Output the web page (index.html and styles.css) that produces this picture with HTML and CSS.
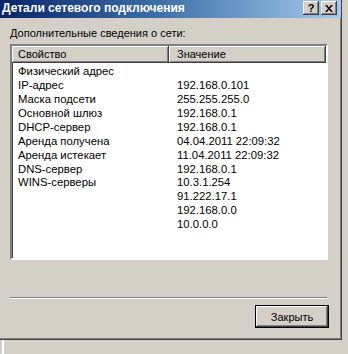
FILE: index.html
```html
<!DOCTYPE html>
<html lang="ru">
<head>
  <meta charset="UTF-8">
  <title>Детали сетевого подключения</title>
  <link rel="stylesheet" href="styles.css">
</head>
<body>

  <div class="window">
    <div class="title-bar">
      <span class="title">Детали сетевого подключения</span>
      <div class="title-buttons">
        <button class="tb-btn help">?</button>
        <button class="tb-btn close">
          <svg width="8" height="7" viewBox="0 0 8 7">
            <path d="M0 0h2l2 2.5L6 0h2L5 3.5 8 7H6L4 4.5 2 7H0l3-3.5z" fill="#000"/>
          </svg>
        </button>
      </div>
    </div>

    <div class="content">
      <div class="caption">Дополнительные сведения о сети:</div>

      <div class="list">
        <div class="list-header">
          <div class="col-head first">Свойство</div>
          <div class="col-head second">Значение</div>
        </div>
        <div class="rows" id="rows"></div>
      </div>

      <div class="separator"></div>

      <div class="footer">
        <button class="btn default">Закрыть</button>
      </div>
    </div>
  </div>

  <div class="behind"></div>

  <script>
    const details = [
      ["Физический адрес", ""],
      ["IP-адрес", "192.168.0.101"],
      ["Маска подсети", "255.255.255.0"],
      ["Основной шлюз", "192.168.0.1"],
      ["DHCP-сервер", "192.168.0.1"],
      ["Аренда получена", "04.04.2011 22:09:32"],
      ["Аренда истекает", "11.04.2011 22:09:32"],
      ["DNS-сервер", "192.168.0.1"],
      ["WINS-серверы", "10.3.1.254"],
      ["", "91.222.17.1"],
      ["", "192.168.0.0"],
      ["", "10.0.0.0"]
    ];

    const rowsDiv = document.getElementById("rows");
    details.forEach(([name, value]) => {
      rowsDiv.innerHTML += `<div class="row"><span class="cell name">${name}</span><span class="cell value">${value}</span></div>`;
    });
  </script>
</body>
</html>
```

FILE: styles.css
```css
:root {
  --face: #d4d0c8;
  --shadow: #808080;
  --dark: #404040;
  --light: #ffffff;
}

body {
  margin: 0;
  padding: 0;
  background-color: var(--face);
  font-family: 'Liberation Sans', Arial, sans-serif;
  font-size: 11px;
  color: #000;
  width: 348px;
  height: 354px;
  overflow: hidden;
}

.window {
  width: 341px;
  height: 339px;
  background-color: var(--face);
  border-right: 1px solid var(--dark);
  border-bottom: 1px solid var(--dark);
  box-shadow: inset -1px -1px 0 var(--shadow);
  display: flex;
  flex-direction: column;
}

.title-bar {
  height: 18px;
  display: flex;
  align-items: flex-start;
  background: linear-gradient(to right, #0a246a, #3a6ea5 45%, #a6caf0);
  padding-right: 4px;
}

.title {
  flex: 1;
  color: white;
  font-weight: bold;
  font-size: 12px;
  line-height: 16px;
  padding-left: 2px;
  white-space: nowrap;
}

.title-buttons {
  display: flex;
  gap: 2px;
  margin-top: 1px;
}

.tb-btn {
  width: 16px;
  height: 14px;
  padding: 0;
  margin: 0;
  background-color: var(--face);
  border: none;
  box-shadow: inset -1px -1px 0 var(--dark), inset 1px 1px 0 var(--light), inset -2px -2px 0 var(--shadow);
  font-family: 'Liberation Sans', Arial, sans-serif;
  font-weight: bold;
  font-size: 11px;
  line-height: 13px;
  display: flex;
  justify-content: center;
  align-items: center;
}

.content {
  flex: 1;
  display: flex;
  flex-direction: column;
  padding: 9px 13px 0 10px;
}

.caption {
  line-height: 13px;
  margin-bottom: 4px;
}

.list {
  height: 212px;
  background-color: white;
  border-top: 2px solid var(--shadow);
  border-left: 2px solid var(--shadow);
  border-right: 2px solid var(--light);
  border-bottom: 2px solid var(--light);
  box-shadow: inset 1px 1px 0 var(--dark);
  display: flex;
  flex-direction: column;
}

.list-header {
  display: flex;
}

.col-head {
  height: 17px;
  line-height: 16px;
  padding-left: 6px;
  box-sizing: border-box;
  background-color: var(--face);
  box-shadow: inset -1px -1px 0 var(--dark), inset 1px 1px 0 var(--light), inset -2px -2px 0 var(--shadow);
}

.col-head.first {
  width: 157px;
}

.col-head.second {
  width: 157px;
  padding-left: 8px;
}

.rows {
  padding-top: 1px;
  font-size: 11.3px;
}

.row {
  display: flex;
  height: 14px;
  line-height: 14px;
}

.row:nth-child(n+9) {
  margin-top: -1px;
  margin-bottom: 1px;
}

.cell.name {
  width: 159px;
  padding-left: 6px;
}

.separator {
  margin-top: 37px;
  border-top: 1px solid var(--shadow);
  border-bottom: 1px solid var(--light);
  box-sizing: border-box;
  height: 2px;
  width: 317px;
}

.footer {
  display: flex;
  justify-content: flex-end;
  margin-top: 6px;
}

.btn {
  width: 74px;
  height: 23px;
  padding: 0;
  margin-right: -1px;
  background-color: var(--face);
  border: 1px solid #000;
  box-shadow: inset -1px -1px 0 var(--dark), inset 1px 1px 0 var(--light), inset -2px -2px 0 var(--shadow);
  font-family: 'Liberation Sans', Arial, sans-serif;
  font-size: 11px;
  color: #000;
}

.behind {
  margin-left: 2px;
  height: 14px;
  border-left: 2px solid var(--light);
}
```
